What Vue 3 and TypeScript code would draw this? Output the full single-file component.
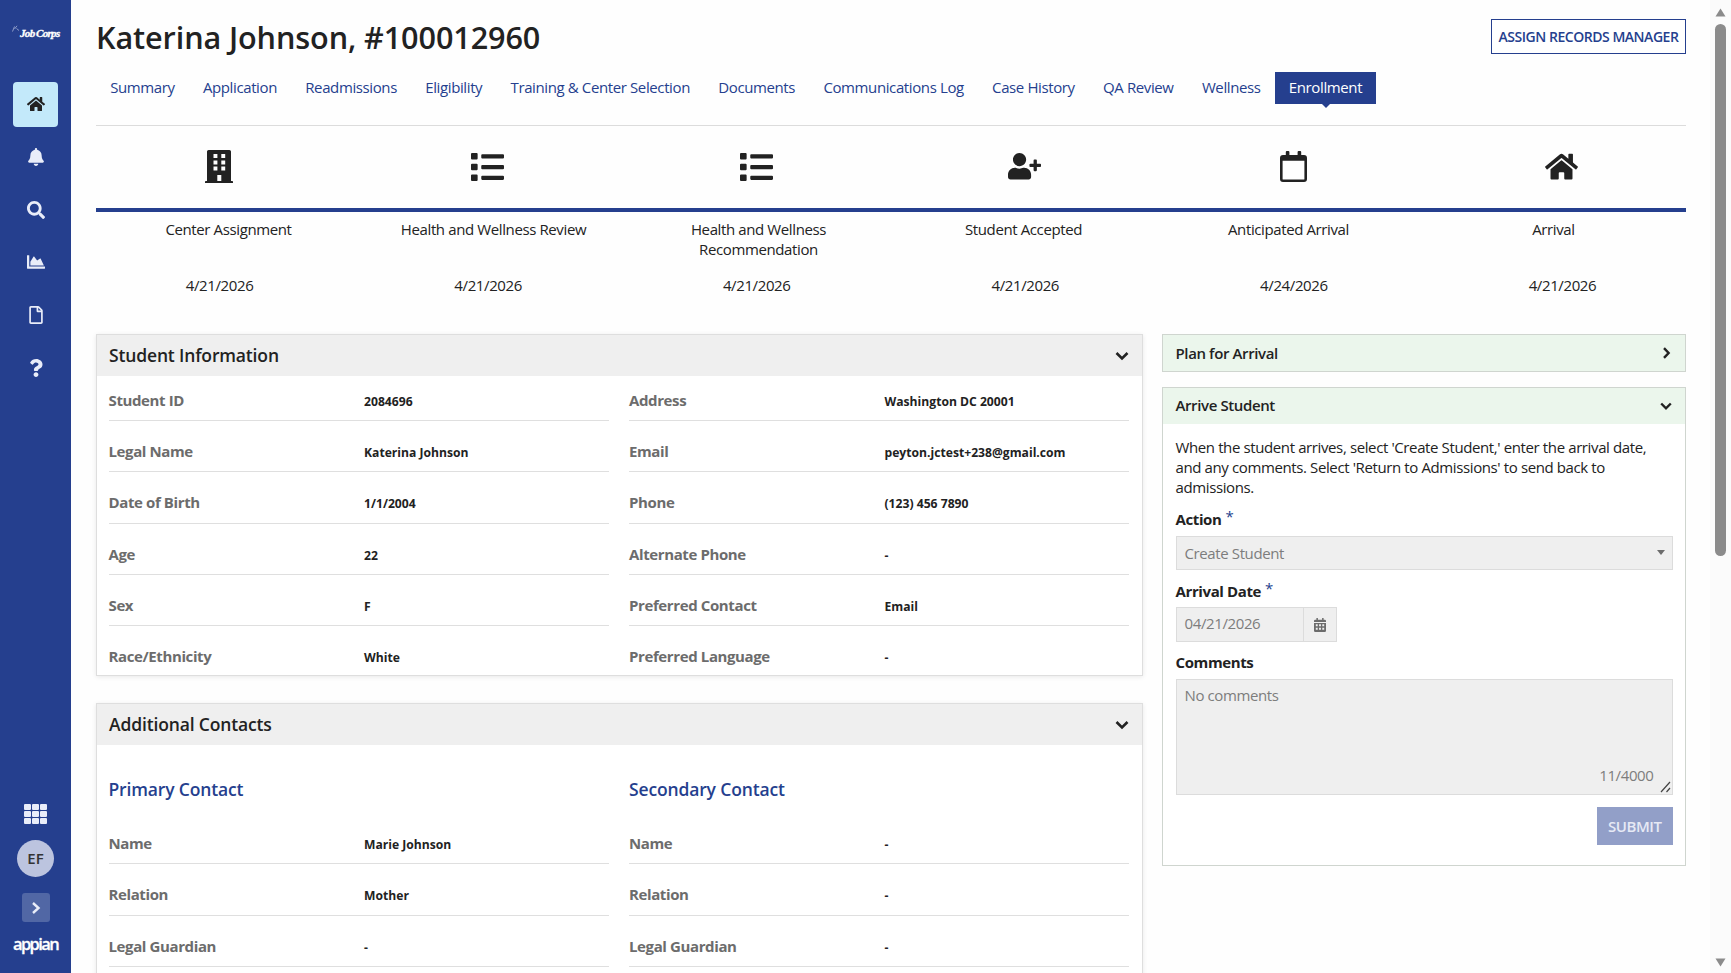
<script setup lang="ts">
interface Step { icon: string; label: string; date: string }
interface Field { label: string; value: string }
interface Glyph { box: string; w: number; h: number; d: string }

const house = 'M280.37 148.26L96 300.11V464a16 16 0 0 0 16 16l112.06-.29a16 16 0 0 0 15.92-16V368a16 16 0 0 1 16-16h64a16 16 0 0 1 16 16v95.64a16 16 0 0 0 16 16.05L464 480a16 16 0 0 0 16-16V300L295.67 148.26a12.19 12.19 0 0 0-15.3 0zM571.6 251.47L488 182.56V44.05a12 12 0 0 0-12-12h-56a12 12 0 0 0-12 12v72.61L318.47 43a48 48 0 0 0-61 0L4.34 251.47a12 12 0 0 0-1.6 16.9l25.5 31A12 12 0 0 0 45.15 301l235.22-193.74a12.19 12.19 0 0 1 15.3 0L530.9 301a12 12 0 0 0 16.9-1.6l25.5-31a12 12 0 0 0-1.7-16.93z'

const nav: Glyph[] = [
  { box: '0 0 576 512', w: 18, h: 16, d: house },
  { box: '0 0 448 512', w: 16, h: 18, d: 'M224 512c35.32 0 63.97-28.65 63.97-64H160.03c0 35.35 28.65 64 63.97 64zm215.39-149.71c-19.32-20.76-55.47-51.99-55.47-154.29 0-77.7-54.48-139.9-127.94-155.16V32c0-17.67-14.32-32-31.98-32s-31.98 14.33-31.98 32v20.84C118.56 68.1 64.08 130.3 64.08 208c0 102.3-36.15 133.53-55.47 154.29-6 6.45-8.66 14.16-8.61 21.71.11 16.4 12.98 32 32.1 32h383.8c19.12 0 32-15.6 32.1-32 .05-7.55-2.61-15.27-8.61-21.71z' },
  { box: '0 0 512 512', w: 18, h: 18, d: 'M505 442.7L405.3 343c-4.5-4.5-10.6-7-17-7H372c27.6-35.3 44-79.7 44-128C416 93.1 322.9 0 208 0S0 93.1 0 208s93.1 208 208 208c48.3 0 92.7-16.4 128-44v16.3c0 6.4 2.5 12.5 7 17l99.7 99.7c9.4 9.4 24.6 9.4 33.9 0l28.3-28.3c9.4-9.4 9.4-24.6.1-34zM208 336c-70.7 0-128-57.2-128-128 0-70.7 57.2-128 128-128 70.7 0 128 57.2 128 128 0 70.7-57.2 128-128 128z' },
  { box: '0 0 512 512', w: 18, h: 18, d: 'M500 384c6.6 0 12 5.4 12 12v40c0 6.6-5.4 12-12 12H12c-6.6 0-12-5.4-12-12V76c0-6.6 5.4-12 12-12h40c6.6 0 12 5.4 12 12v308h436zM372.7 159.5L288 216l-85.3-113.7c-5.1-6.8-15.5-6.3-19.9 1L96 248v104h384l-89.9-187.8c-3.2-6.5-11.4-8.7-17.4-4.7z' },
  { box: '0 0 384 512', w: 14, h: 18, d: 'M369.9 97.9L286 14C277 5 264.8-.1 252.1-.1H48C21.5 0 0 21.5 0 48v416c0 26.5 21.5 48 48 48h288c26.5 0 48-21.5 48-48V131.9c0-12.7-5.1-25-14.1-34zM332.1 128H256V51.9l76.1 76.1zM48 464V48h160v104c0 13.3 10.7 24 24 24h104v288H48z' },
  { box: '0 0 384 512', w: 14, h: 18, d: 'M202.021 0C122.202 0 70.503 32.703 29.914 91.026c-7.363 10.58-5.093 25.086 5.178 32.874l43.138 32.709c10.373 7.865 25.132 6.026 33.253-4.148 25.049-31.381 43.63-49.449 82.757-49.449 30.764 0 68.816 19.799 68.816 49.631 0 22.552-18.617 34.134-48.993 51.164-35.423 19.86-82.299 44.576-82.299 106.405V320c0 13.255 10.745 24 24 24h72.471c13.255 0 24-10.745 24-24v-5.773c0-42.86 125.268-44.645 125.268-160.627C377.504 66.256 286.902 0 202.021 0zM192 373.459c-38.196 0-69.271 31.075-69.271 69.271 0 38.195 31.075 69.27 69.271 69.27s69.271-31.075 69.271-69.271-31.075-69.27-69.271-69.27z' },
]

const listPath = 'M1 0h4.6a1 1 0 0 1 1 1v4.4a1 1 0 0 1-1 1H1a1 1 0 0 1-1-1V1a1 1 0 0 1 1-1zM1 10.6h4.6a1 1 0 0 1 1 1V16a1 1 0 0 1-1 1H1a1 1 0 0 1-1-1v-4.4a1 1 0 0 1 1-1zM1 21.2h4.6a1 1 0 0 1 1 1v4.4a1 1 0 0 1-1 1H1a1 1 0 0 1-1-1v-4.4a1 1 0 0 1 1-1zM11.2 1.2h20.6a1 1 0 0 1 1 1v2.2a1 1 0 0 1-1 1H11.2a1 1 0 0 1-1-1V2.2a1 1 0 0 1 1-1zM11.2 11.8h20.6a1 1 0 0 1 1 1V15a1 1 0 0 1-1 1H11.2a1 1 0 0 1-1-1v-2.2a1 1 0 0 1 1-1zM11.2 22.4h20.6a1 1 0 0 1 1 1v2.2a1 1 0 0 1-1 1H11.2a1 1 0 0 1-1-1v-2.2a1 1 0 0 1 1-1z'

const glyphs: Record<string, Glyph> = {
  building: { box: '0 0 28 33', w: 28, h: 33, d: 'M3.6 0h20.8A1.6 1.6 0 0 1 26 1.6V31h1.2a.8.8 0 0 1 .8.8V33H0v-1.2a.8.8 0 0 1 .8-.8H2V1.6A1.6 1.6 0 0 1 3.6 0zM8.5 4v4h3.9V4zM16.3 4v4h3.9V4zM8.5 10.4v4h3.9v-4zM16.3 10.4v4h3.9v-4zM8.5 16.6v4h3.9v-4zM16.3 16.6v4h3.9v-4zM12.3 25v6h4v-6z' },
  list: { box: '0 0 32.8 27.6', w: 33, h: 28, d: listPath },
  user: { box: '0 0 640 512', w: 33, h: 26.4, d: 'M624 208h-64v-64c0-8.8-7.2-16-16-16h-32c-8.8 0-16 7.2-16 16v64h-64c-8.8 0-16 7.2-16 16v32c0 8.8 7.2 16 16 16h64v64c0 8.8 7.2 16 16 16h32c8.8 0 16-7.2 16-16v-64h64c8.8 0 16-7.2 16-16v-32c0-8.8-7.2-16-16-16zm-400 48c70.7 0 128-57.3 128-128S294.7 0 224 0 96 57.3 96 128s57.3 128 128 128zm89.6 32h-16.7c-22.2 10.2-46.9 16-72.9 16s-50.6-5.8-72.9-16h-16.7C60.2 288 0 348.2 0 422.4V464c0 26.5 21.5 48 48 48h352c26.5 0 48-21.5 48-48v-41.6c0-74.2-60.2-134.4-134.4-134.4z' },
  calendar: { box: '0 0 27 31', w: 27, h: 31, d: 'M6.8 0h1.600a1 1 0 0 1 1 1v3h8.200V1a1 1 0 0 1 1-1h1.600a1 1 0 0 1 1 1v3H24a3 3 0 0 1 3 3v21a3 3 0 0 1-3 3H3a3 3 0 0 1-3-3V7a3 3 0 0 1 3-3h2.800V1a1 1 0 0 1 1-1zM2.600 9.800v18.100a.5.5 0 0 0 .5.5h20.800a.5.5 0 0 0 .5-.5V9.800z' },
  home: { box: '0 0 576 512', w: 33, h: 29.3, d: house },
}

const tabs = ['Summary', 'Application', 'Readmissions', 'Eligibility', 'Training & Center Selection', 'Documents', 'Communications Log', 'Case History', 'QA Review', 'Wellness', 'Enrollment']

const steps: Step[] = [
  { icon: 'building', label: 'Center Assignment', date: '4/21/2026' },
  { icon: 'list', label: 'Health and Wellness Review', date: '4/21/2026' },
  { icon: 'list', label: 'Health and Wellness Recommendation', date: '4/21/2026' },
  { icon: 'user', label: 'Student Accepted', date: '4/21/2026' },
  { icon: 'calendar', label: 'Anticipated Arrival', date: '4/24/2026' },
  { icon: 'home', label: 'Arrival', date: '4/21/2026' },
]

const student: Field[][] = [
  [
    { label: 'Student ID', value: '2084696' },
    { label: 'Legal Name', value: 'Katerina Johnson' },
    { label: 'Date of Birth', value: '1/1/2004' },
    { label: 'Age', value: '22' },
    { label: 'Sex', value: 'F' },
    { label: 'Race/Ethnicity', value: 'White' },
  ],
  [
    { label: 'Address', value: 'Washington DC 20001' },
    { label: 'Email', value: 'peyton.jctest+238@gmail.com' },
    { label: 'Phone', value: '(123) 456 7890' },
    { label: 'Alternate Phone', value: '-' },
    { label: 'Preferred Contact', value: 'Email' },
    { label: 'Preferred Language', value: '-' },
  ],
]

const contacts: { title: string; fields: Field[] }[] = [
  { title: 'Primary Contact', fields: [
    { label: 'Name', value: 'Marie Johnson' },
    { label: 'Relation', value: 'Mother' },
    { label: 'Legal Guardian', value: '-' },
  ] },
  { title: 'Secondary Contact', fields: [
    { label: 'Name', value: '-' },
    { label: 'Relation', value: '-' },
    { label: 'Legal Guardian', value: '-' },
  ] },
]
</script>

<template>
  <div class="app">
    <aside class="sidebar">
      <div class="logo">
        <svg class="swoosh" width="8" height="7" viewBox="0 0 8 7"><path d="M.5 6.500L2.500 1.500M2.500 4L5 .8M4.500 3.500L7 5.500" fill="none" stroke="#a9b5d8" stroke-width=".8" /></svg>
        <span>Job Corps</span>
      </div>
      <nav class="nav">
        <a v-for="(g, i) in nav" :key="i" class="nav-item" :class="{ on: i === 0 }">
          <svg :width="g.w" :height="g.h" :viewBox="g.box"><path :d="g.d" fill="currentColor" /></svg>
        </a>
      </nav>
      <div class="side-foot">
        <div class="waffle"><i v-for="n in 9" :key="n"></i></div>
        <div class="avatar">EF</div>
        <div class="expand"><svg width="10" height="14" viewBox="0 0 10 14"><path d="M2 2l5.500 5L2 12" fill="none" stroke="currentColor" stroke-width="2.400" /></svg></div>
        <div class="brand"><span>appian</span></div>
      </div>
    </aside>

    <main class="main">
      <header class="head">
        <h1>Katerina Johnson, #100012960</h1>
        <button class="assign">ASSIGN RECORDS MANAGER</button>
      </header>
      <nav class="tabs">
        <a v-for="t in tabs" :key="t" class="tab" :class="{ active: t === 'Enrollment' }">{{ t }}</a>
      </nav>

      <section class="timeline">
        <div class="spread icons">
          <div v-for="(s, i) in steps" :key="i" class="step-icon">
            <svg :width="glyphs[s.icon].w" :height="glyphs[s.icon].h" :viewBox="glyphs[s.icon].box"><path :d="glyphs[s.icon].d" fill="currentColor" fill-rule="evenodd" /></svg>
          </div>
        </div>
        <div class="rail"></div>
        <div class="labels"><div v-for="(s, i) in steps" :key="i" class="label">{{ s.label }}</div></div>
        <div class="spread dates"><div v-for="(s, i) in steps" :key="i">{{ s.date }}</div></div>
      </section>

      <div class="columns">
        <div class="left">
          <section class="card">
            <div class="card-head"><h2>Student Information</h2><svg class="chev" width="14" height="10" viewBox="0 0 14 10"><path d="M1.500 2l5.500 5.500L12.500 2" fill="none" stroke="currentColor" stroke-width="2.600" /></svg></div>
            <div class="fields">
              <div v-for="(col, c) in student" :key="c">
                <div v-for="f in col" :key="f.label" class="row"><span class="k">{{ f.label }}</span><span class="v">{{ f.value }}</span></div>
              </div>
            </div>
          </section>
          <section class="card contacts">
            <div class="card-head"><h2>Additional Contacts</h2><svg class="chev" width="14" height="10" viewBox="0 0 14 10"><path d="M1.500 2l5.500 5.500L12.500 2" fill="none" stroke="currentColor" stroke-width="2.600" /></svg></div>
            <div class="fields">
              <div v-for="c in contacts" :key="c.title">
                <h3>{{ c.title }}</h3>
                <div v-for="f in c.fields" :key="f.label" class="row"><span class="k">{{ f.label }}</span><span class="v">{{ f.value }}</span></div>
              </div>
            </div>
          </section>
        </div>

        <div class="right">
          <section class="box plan">
            <div class="box-head"><h4>Plan for Arrival</h4><svg width="10" height="12" viewBox="0 0 10 12"><path d="M2 1.200l4.600 4.800L2 10.800" fill="none" stroke="currentColor" stroke-width="2.400" /></svg></div>
          </section>
          <section class="box arrive">
            <div class="box-head"><h4>Arrive Student</h4><svg width="12" height="9" viewBox="0 0 12 9"><path d="M1.200 1.500L6 6.300 10.800 1.500" fill="none" stroke="currentColor" stroke-width="2.400" /></svg></div>
            <div class="form">
              <p>When the student arrives, select 'Create Student,' enter the arrival date, and any comments. Select 'Return to Admissions' to send back to admissions.</p>
              <div class="lab">Action<b>*</b></div>
              <div class="field select"><span>Create Student</span><i class="caret"></i></div>
              <div class="lab">Arrival Date<b>*</b></div>
              <div class="field date">
                <span>04/21/2026</span>
                <i class="cal"><svg width="12" height="14" viewBox="0 0 12 14"><path d="M2.400 0h1.500v1.700h4.200V0h1.500v1.700h1.200A1.200 1.200 0 0 1 12 2.900V4.100H0V2.900a1.200 1.200 0 0 1 1.200-1.200h1.200zM0 4.900h12v7.900a1.200 1.200 0 0 1-1.200 1.200H1.200A1.200 1.200 0 0 1 0 12.800zM1.800 6.300v2h1.900V6.300zM5.050 6.300v2h1.900V6.300zM8.300 6.300v2h1.900V6.300zM1.800 9.800v2h1.900V9.800zM5.050 9.800v2h1.900V9.800zM8.300 9.800v2h1.900V9.800z" fill="currentColor" fill-rule="evenodd" /></svg></i>
              </div>
              <div class="lab">Comments</div>
              <div class="field area">
                <span>No comments</span>
                <span class="count">11/4000</span>
                <svg class="grip" width="11" height="12" viewBox="0 0 11 12"><path d="M1 11L10 1M6.500 11L10 7" fill="none" stroke="#444" stroke-width="1.200" /></svg>
              </div>
              <div class="actions"><button class="submit">SUBMIT</button></div>
            </div>
          </section>
        </div>
      </div>
    </main>

    <div class="scroll">
      <svg width="11" height="9" viewBox="0 0 11 9"><path d="M5.500 0.500L10.500 8.500H.5z" fill="#8b8b8b" /></svg>
      <div class="thumb"></div>
      <svg class="down" width="11" height="9" viewBox="0 0 11 9"><path d="M5.500 8.500L10.500 .5H.5z" fill="#8b8b8b" /></svg>
    </div>
  </div>
</template>

<style>
html, body { margin: 0; overflow: hidden; background: #fff; }
</style>

<style scoped>
.app {
  --blue: #253f8e;
  box-sizing: border-box;
  display: flex;
  width: 1731px;
  height: 973px;
  overflow: hidden;
  background: #fefefe;
  color: #222;
  font-family: "Open Sans", "Noto Sans", sans-serif;
  font-size: 15px;
  letter-spacing: -0.385px;
}
.app *, .app *::after { box-sizing: border-box; }
h1, h2, h3, h4, p { margin: 0; font-weight: 600; }
svg { display: block; flex: none; }
button { font: inherit; padding: 0; border-radius: 0; }
i { font-style: normal; }

.sidebar { flex: none; width: 71px; background: var(--blue); display: flex; flex-direction: column; align-items: center; color: #e9edf9; }
.logo { display: flex; height: 82px; width: 100%; padding: 25px 0 0 12px; color: #fff; font: italic bold 11px/16px "Liberation Serif", serif; white-space: nowrap; letter-spacing: -0.680px; word-spacing: -0.500px; -webkit-text-stroke: .3px #fff; }
.nav { display: flex; flex-direction: column; gap: 7.800px; }
.nav-item { width: 45px; height: 45px; padding: 0 0 1px 1px; border-radius: 4px; display: flex; align-items: center; justify-content: center; }
.nav-item.on { background: #c3e9fa; color: #222; }
.side-foot { margin-top: auto; height: 169px; display: flex; flex-direction: column; align-items: center; }
.waffle { display: grid; grid-template-columns: repeat(3, 7px); gap: 1px; }
.waffle i { height: 6px; border-radius: 1px; background: #e9edf9; }
.avatar { margin-top: 16px; width: 37px; height: 37px; border-radius: 50%; background: #bcc4df; color: #333; font-weight: 600; font-size: 15px; line-height: 37px; text-align: center; letter-spacing: 0; }
.expand { margin: 16px 0 0 1px; width: 28px; height: 29px; border-radius: 3px; background: #5167a5; display: flex; align-items: center; justify-content: center; }
.brand { margin-top: 10px; color: #fff; font-size: 16.500px; line-height: 24px; font-weight: 600; letter-spacing: -1.600px; -webkit-text-stroke: .3px #fff; }

.main { flex: none; width: 1639px; padding: 19px 24px 0 25px; }
.head { display: flex; justify-content: space-between; height: 53px; }
h1 { font-size: 30.600px; line-height: 36px; letter-spacing: -0.100px; white-space: nowrap; }
.assign { width: 195px; height: 35px; border: 1px solid var(--blue); background: #fff; color: var(--blue); font-weight: 600; font-size: 14px; line-height: 32px; letter-spacing: -0.470px; white-space: nowrap; }
.tabs { display: flex; height: 54px; border-bottom: 1px solid #dcdcdc; }
.tab { position: relative; height: 32px; padding: 0 14.150px; line-height: 31px; color: var(--blue); white-space: nowrap; }
.tab.active { background: var(--blue); color: #fff; }
.tab.active::after { content: ""; position: absolute; left: 50%; top: 32px; margin-left: -4px; border: 4px solid transparent; border-top-color: var(--blue); border-bottom: 0; }

.spread { display: grid; grid-template-columns: repeat(6, 1fr); column-gap: 21.500px; text-align: center; }
.icons { height: 82px; align-items: center; padding-bottom: 1px; }
.step-icon { display: flex; justify-content: center; padding-right: 1px; }
.rail { height: 4px; background: var(--blue); }
.labels { display: grid; grid-template-columns: repeat(6, 1fr); height: 63px; padding-top: 7px; line-height: 20px; text-align: center; }
.label { padding: 0 28px; }
.dates { line-height: 20px; height: 59px; }

.columns { display: flex; justify-content: space-between; align-items: flex-start; }
.left { width: 1047px; }
.card { border: 1px solid #dedede; height: 341.500px; box-shadow: 0 1px 5px rgba(0, 0, 0, .09); background: #fff; overflow: hidden; }
.contacts { margin-top: 27.500px; height: 420px; }
.card-head { display: flex; align-items: center; justify-content: space-between; height: 41px; padding: 0 13px 0 12px; background: #efefef; }
h2, h3 { font-size: 17.500px; line-height: 24px; letter-spacing: -0.150px; }
h2 { padding-bottom: 1px; }
.fields { display: grid; grid-template-columns: 500px 500px; column-gap: 20.500px; padding: 0 0 0 11.500px; }
.row { display: flex; align-items: flex-start; height: 51.250px; padding-top: 19px; border-bottom: 1px solid #dfdfdf; line-height: 22px; white-space: nowrap; }
.row:first-child { height: 45px; padding-top: 13px; }
.k { width: 255.500px; color: #6c6c6c; font-weight: 700; }
.v { font-weight: 700; font-size: 12.150px; line-height: 25px; letter-spacing: 0; }
h3 { color: var(--blue); padding-top: 32px; height: 68px; }

.right { width: 524px; }
.box { border: 1px solid #cfd5cf; background: #fff; }
.box-head { display: flex; align-items: center; justify-content: space-between; height: 36px; padding: 0 13px 0 12.500px; background: #ebf6ec; }
h4 { font-size: 15px; line-height: 34px; }
.arrive { margin-top: 15px; height: 479px; }
.arrive h4 { line-height: 33px; padding-bottom: 1px; }
.form { padding: 14.400px 12.500px 0; }
p { font-weight: 400; line-height: 19.850px; }
.lab { font-weight: 700; line-height: 20px; margin: 11px 0 7px; }
.lab b { margin-left: 4px; font-weight: 400; color: var(--blue); position: relative; top: -3px; line-height: 10px; }
.field { border: 1px solid #dcdcdc; background: #efefef; color: #7d7d7d; height: 34.500px; line-height: 31px; padding: 0 8px; }
.field + .lab { margin: 10.500px 0 6.500px; }
.select { display: flex; justify-content: space-between; align-items: center; line-height: 30px; padding-bottom: 1px; }
.caret { border: 4.500px solid transparent; border-top: 5px solid #6c6c6c; border-bottom: 0; margin-right: -1px; }
.date { width: 161.500px; display: flex; justify-content: space-between; padding-right: 0; }
.cal { width: 33px; border-left: 1px solid #dcdcdc; display: flex; align-items: center; justify-content: center; color: #6c6c6c; }
.area { position: relative; height: 116.500px; }
.count { position: absolute; right: 18px; bottom: 3px; line-height: 31px; }
.grip { position: absolute; right: 1px; bottom: 1px; }
.actions { display: flex; justify-content: flex-end; padding-top: 12px; }
.submit { width: 75.500px; height: 38px; border: 0; background: #929fc8; color: #e6e9f5; font-weight: 600; line-height: 37px; letter-spacing: -0.420px; }

.scroll { flex: 1; background: #fbfbfb; display: flex; flex-direction: column; align-items: center; padding: 8px 0 6px; }
.thumb { width: 11.500px; height: 532px; margin-top: 7px; border-radius: 6px; background: #8b8b8b; }
.down { margin-top: auto; }
</style>
